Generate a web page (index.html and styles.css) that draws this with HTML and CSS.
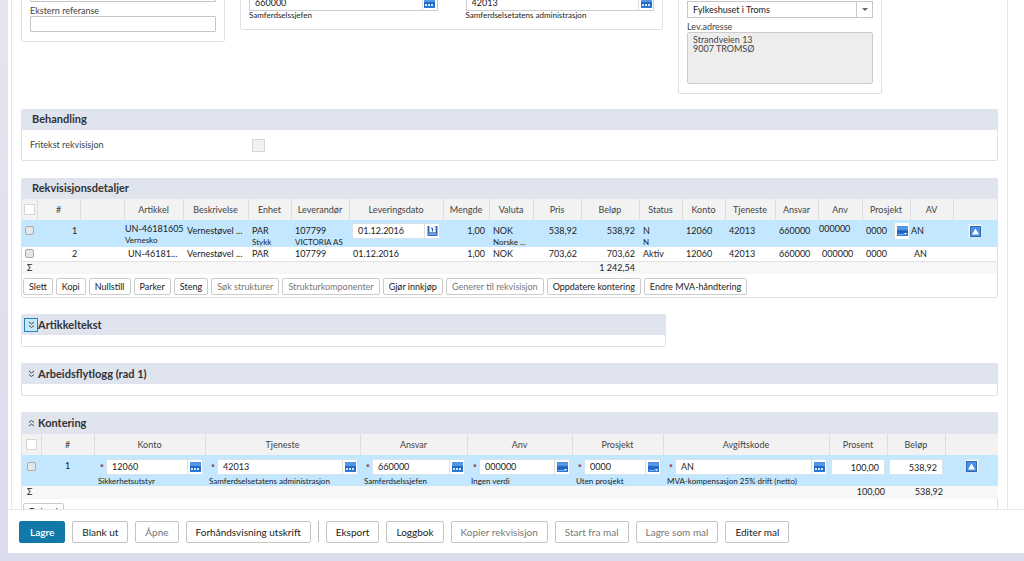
FILE: index.html
```html
<!DOCTYPE html>
<html lang="no">
<head>
<meta charset="utf-8">
<title>Rekvisisjon</title>
<meta name="viewport" content="width=device-width, initial-scale=1">
<link rel="stylesheet" href="styles.css">
</head>
<body>
<svg class="defs" aria-hidden="true">
  <linearGradient id="blue" x1="0" y1="0" x2="0" y2="1">
    <stop offset="0" stop-color="#4b8fe0"/><stop offset="0.3" stop-color="#5a9fea"/><stop offset="0.5" stop-color="#1c62c2"/><stop offset="1" stop-color="#2f7bd6"/>
  </linearGradient>
  <symbol id="dots" viewBox="0 0 11 10"><rect width="11" height="10" fill="url(#blue)"/><path d="M1 6h2v2H1zM4 6h2v2H4zM7 6h2v2H7z" fill="#d6eaff"/></symbol>
  <symbol id="list" viewBox="0 0 11 10"><rect width="11" height="10" fill="url(#blue)"/><path d="M1 8.500h6" stroke="#7db4f0" fill="none"/><path d="M7 7h3L8.500 9z" fill="#fff"/></symbol>
  <symbol id="up" viewBox="0 0 11 11"><rect x=".5" y=".5" width="10" height="10" fill="#4a90e2" stroke="#2c68b4"/><path d="M5.500 2.500L9 8.500H2z" fill="#fff"/></symbol>
  <symbol id="calendar" viewBox="0 0 11 11"><path d="M0 0h11v11H0z" fill="#2f62ae"/><path d="M2 0h7v7H2z" fill="#e9f1fc"/><path d="M1 8h9v2H1z" fill="#78a9e8"/><path d="M4 2.500h1.500V6" stroke="#21457e" fill="none"/></symbol>
  <symbol id="down2" viewBox="0 0 7 8"><path d="M1 1l2.500 2L6 1M1 4.500l2.500 2L6 4.500" fill="none" stroke="#444"/></symbol>
  <symbol id="up2" viewBox="0 0 7 8"><path d="M1 3.500l2.500-2L6 3.500M1 7l2.500-2L6 7" fill="none" stroke="#444"/></symbol>
</svg>
<div class="shell">
<main class="workspace">
<div class="page">
  <div class="head-grid">
    <section class="box box-ref">
      <input class="field" aria-label="Referanse">
      <label for="ext">Ekstern referanse</label>
      <input class="field" id="ext">
    </section>
    <section class="box box-org">
      <div>
        <div class="lookup"><input value="660000" aria-label="Ansvar"><button aria-label="Velg ansvar"><svg><use href="#dots"/></svg></button></div>
        <div class="sub">Samferdselssjefen</div>
      </div>
      <div>
        <div class="lookup"><input value="42013" aria-label="Tjeneste"><button aria-label="Velg tjeneste"><svg><use href="#dots"/></svg></button></div>
        <div class="sub">Samferdselsetatens administrasjon</div>
      </div>
    </section>
    <section class="box box-addr">
      <div class="select"><select aria-label="Leveringssted"><option>Fylkeshuset i Troms</option></select></div>
      <label for="addr">Lev.adresse</label>
      <textarea id="addr" readonly>Strandveien 13
9007 TROMSØ</textarea>
    </section>
  </div>

  <section class="card">
    <h2>Behandling</h2>
    <div class="free"><label for="fri">Fritekst rekvisisjon</label><input type="checkbox" class="check check-off" id="fri" disabled></div>
  </section>

  <section class="card">
    <h2>Rekvisisjonsdetaljer</h2>
    <table class="grid details">
      <colgroup><col class="w15"><col class="w43"><col class="w44"><col class="w59"><col class="w65"><col class="w43"><col class="w58"><col class="w94"><col class="w46"><col class="w44"><col class="w48"><col class="w58"><col class="w43"><col class="w43"><col class="w50"><col class="w43"><col class="w44"><col class="w48"><col class="w43"><col class="w44"></colgroup>
      <thead><tr><th><input type="checkbox" class="check check-all" aria-label="Velg alle"></th><th>#</th><th></th><th>Artikkel</th><th>Beskrivelse</th><th>Enhet</th><th>Leverandør</th><th>Leveringsdato</th><th>Mengde</th><th>Valuta</th><th>Pris</th><th>Beløp</th><th>Status</th><th>Konto</th><th>Tjeneste</th><th>Ansvar</th><th>Anv</th><th>Prosjekt</th><th>AV</th><th></th></tr></thead>
      <tbody>
      <tr class="active">
        <td><input type="checkbox" class="check check-row" aria-label="Velg rad 1"></td><td class="nr">1</td><td></td>
        <td class="edit art">UN-46181605<div class="sub">Vernesko</div></td><td>Vernestøvel ...</td><td>PAR<div class="sub">Stykk</div></td><td>107799<div class="sub">VICTORIA AS</div></td>
        <td class="edit"><div class="lookup"><input value="01.12.2016" aria-label="Leveringsdato"><button aria-label="Kalender"><svg><use href="#calendar"/></svg></button></div></td>
        <td class="num">1,00</td><td>NOK<div class="sub">Norske ...</div></td><td class="num">538,92</td><td class="num">538,92</td><td>N<div class="sub">N</div></td><td>12060</td><td>42013</td><td>660000</td><td class="edit tight">000000</td>
        <td class="edit"><div class="lookup ghost"><input value="0000" aria-label="Prosjekt"><button aria-label="Velg prosjekt"><svg><use href="#list"/></svg></button></div></td>
        <td class="tight">AN</td><td class="act"><button class="mini" aria-label="Skjul rad"><svg><use href="#up"/></svg></button></td>
      </tr>
      <tr class="plain">
        <td><input type="checkbox" class="check check-row" aria-label="Velg rad 2"></td><td class="nr">2</td><td></td><td class="wide">UN-46181...</td><td>Vernestøvel ...</td><td>PAR</td><td>107799</td><td>01.12.2016</td><td class="num">1,00</td><td>NOK</td><td class="num">703,62</td><td class="num">703,62</td><td>Aktiv</td><td>12060</td><td>42013</td><td>660000</td><td>000000</td><td>0000</td><td>AN</td><td></td>
      </tr>
      </tbody>
      <tfoot><tr><td class="sigma">Σ</td><td colspan="10"></td><td class="num">1 242,54</td><td colspan="8"></td></tr></tfoot>
    </table>
    <div class="tools">
      <button>Slett</button><button>Kopi</button><button>Nullstill</button><button>Parker</button><button>Steng</button><button disabled>Søk strukturer</button><button disabled>Strukturkomponenter</button><button>Gjør innkjøp</button><button disabled>Generer til rekvisisjon</button><button>Oppdatere kontering</button><button>Endre MVA-håndtering</button>
    </div>
  </section>

  <section class="card card-part">
    <h2 class="fold"><button class="focus" aria-label="Vis artikkeltekst"><svg><use href="#down2"/></svg></button>Artikkeltekst</h2>
    <div class="closed"></div>
  </section>

  <section class="card">
    <h2 class="fold"><button aria-label="Vis arbeidsflytlogg"><svg><use href="#down2"/></svg></button>Arbeidsflytlogg (rad 1)</h2>
    <div class="closed"></div>
  </section>

  <section class="card">
    <h2 class="fold fold-open"><button aria-label="Skjul kontering"><svg><use href="#up2"/></svg></button>Kontering</h2>
    <table class="grid posting">
      <colgroup><col class="w19"><col class="w53"><col class="w111"><col class="w155"><col class="w107"><col class="w105"><col class="w91"><col class="w166"><col class="w58"><col class="w58"><col class="w53"></colgroup>
      <thead><tr><th><input type="checkbox" class="check check-all" aria-label="Velg alle"></th><th>#</th><th>Konto</th><th>Tjeneste</th><th>Ansvar</th><th>Anv</th><th>Prosjekt</th><th>Avgiftskode</th><th>Prosent</th><th>Beløp</th><th></th></tr></thead>
      <tbody><tr class="active">
        <td><input type="checkbox" class="check check-row" aria-label="Velg rad 1"></td><td class="nr">1</td>
        <td><div class="req"><i>*</i><div class="lookup"><input value="12060" aria-label="Konto"><button aria-label="Velg konto"><svg><use href="#dots"/></svg></button></div></div><div class="sub">Sikkerhetsutstyr</div></td>
        <td><div class="req"><i>*</i><div class="lookup"><input value="42013" aria-label="Tjeneste"><button aria-label="Velg tjeneste"><svg><use href="#dots"/></svg></button></div></div><div class="sub">Samferdselsetatens administrasjon</div></td>
        <td><div class="req"><i>*</i><div class="lookup"><input value="660000" aria-label="Ansvar"><button aria-label="Velg ansvar"><svg><use href="#dots"/></svg></button></div></div><div class="sub">Samferdselssjefen</div></td>
        <td><div class="req"><i>*</i><div class="lookup"><input value="000000" aria-label="Anv"><button aria-label="Velg anv"><svg><use href="#list"/></svg></button></div></div><div class="sub">Ingen verdi</div></td>
        <td><div class="req"><i>*</i><div class="lookup"><input value="0000" aria-label="Prosjekt"><button aria-label="Velg prosjekt"><svg><use href="#list"/></svg></button></div></div><div class="sub">Uten prosjekt</div></td>
        <td><div class="req"><i>*</i><div class="lookup"><input value="AN" aria-label="Avgiftskode"><button aria-label="Velg avgiftskode"><svg><use href="#dots"/></svg></button></div></div><div class="sub">MVA-kompensasjon 25% drift (netto)</div></td>
        <td><input class="field right" value="100,00" aria-label="Prosent"></td>
        <td><input class="field right" value="538,92" aria-label="Beløp"></td>
        <td class="act"><button class="mini" aria-label="Skjul rad"><svg><use href="#up"/></svg></button></td>
      </tr></tbody>
      <tfoot><tr><td class="sigma">Σ</td><td colspan="7"></td><td class="num">100,00</td><td class="num">538,92</td><td></td></tr></tfoot>
    </table>
    <div class="tools"><button>Del rad</button></div>
  </section>
</div>
</main>
<footer class="actions">
  <button class="primary">Lagre</button><button>Blank ut</button><button disabled>Åpne</button><button>Forhåndsvisning utskrift</button><span class="divider"></span><button>Eksport</button><button>Loggbok</button><button disabled>Kopier rekvisisjon</button><button disabled>Start fra mal</button><button disabled>Lagre som mal</button><button>Editer mal</button>
</footer>
</div>
</body>
</html>
```
FILE: styles.css
```css
* { box-sizing: border-box; }
body { margin: 0; background: linear-gradient(#e3e5f0, #dadcec); color: #222; font: 9px/12px Lato, "Open Sans", sans-serif; }
button, input, select, textarea { font: inherit; color: inherit; margin: 0; }
.defs { position: absolute; width: 0; height: 0; }
.shell { display: flex; flex-direction: column; height: 100vh; padding: 0 0 8px 8px; }
.workspace { flex: 1; min-height: 0; overflow: hidden; background: #fff; }
.page { margin: 0 16px 0 3px; padding: 0 9px; border: solid #e4e5ec; border-width: 0 1px; }

.head-grid { display: grid; grid-template-columns: 204fr 423fr 204fr 101fr; gap: 15px; align-items: start; height: 124px; margin-top: -15px; }
.box { border: 1px solid #e0e1e6; border-radius: 2px; padding: 0 8px 9px; color: #444; }
.box label { display: block; line-height: 11px; }
.field { display: block; width: 100%; height: 16px; border: 1px solid #c6c6c6; border-radius: 1px; background: #fff; padding: 0 5px; line-height: 14px; }
.right { text-align: right; }
.box-ref label { margin-top: 3px; }
.box-org { display: grid; grid-template-columns: 1fr 1fr; gap: 28px; padding-top: 9px; }
.box-addr { padding-top: 15px; }
.select { position: relative; margin-bottom: 3px; color: #222; }
.select select { appearance: none; display: block; width: 100%; height: 17px; border: 1px solid #c6c6c6; background: #fff; padding: 0 5px; }
.select::before { content: ""; position: absolute; right: 16px; top: 1px; bottom: 1px; border-left: 1px solid #ccc; }
.select::after { content: ""; position: absolute; right: 5px; top: 7px; border: 3px solid transparent; border-top-color: #666; }
textarea { display: block; width: 100%; height: 52px; resize: none; border: 1px solid #ccc; border-radius: 2px; background: #ededed; padding: 2px 5px; line-height: 9px; }

.lookup { display: flex; flex: 1; min-width: 0; height: 16px; border: 1px solid #ccc; background: #fff; color: #222; }
.lookup input { flex: 1; width: 0; min-width: 0; border: 0; padding: 0 5px; background: none; line-height: 14px; }
.lookup button { display: grid; place-items: center; width: 15px; padding: 0; border: 0; border-left: 1px solid #ddd; background: #fff; }
.lookup svg { width: 11px; height: 10px; }
.sub { font-size: 8px; line-height: 9px; color: #222; white-space: nowrap; }

.card { border: 1px solid #e0e1e6; border-radius: 2px; margin-bottom: 16px; }
.card-part { width: 66%; }
h2 { margin: -1px -1px 0; height: 21px; padding-left: 11px; background: #dfe4ef; border-radius: 2px 2px 0 0; color: #333; font-size: 11px; line-height: 20px; }
.fold { display: flex; align-items: center; padding-left: 3px; }
.fold-open { height: 22px; }
.fold button { display: grid; place-items: center; width: 14px; height: 14px; padding: 0; border: 1px solid transparent; background: none; }
.fold .focus { background: #c5e8fb; border-color: #2a83b8; }
.fold svg { width: 7px; height: 8px; }
.closed { height: 11px; }
.free { display: grid; grid-template-columns: 222px 1fr; align-items: center; height: 30px; margin-bottom: 17px; padding-left: 8px; color: #444; }
.card:has(.free) .free { margin-bottom: 0; }
.card:has(.free) { margin-bottom: 17px; }
.check { appearance: none; display: block; margin: 0 auto; width: 11px; height: 11px; border: 1px solid #d6d6d6; background: #fff; }
.check-off { width: 13px; height: 13px; margin: 0; background: #f1f1f1; }
.check-row { width: 9px; height: 9px; border-color: #aaa; border-radius: 2px; background: #e6e6e6; }

.grid { width: 100%; table-layout: fixed; border-collapse: collapse; }
th { height: 21px; padding: 0; background: #f2f2f2; border-left: 1px solid #ddd; color: #444; font-weight: 400; white-space: nowrap; }
th:first-child { border-left: 0; }
td { padding: 0 4px; vertical-align: top; white-space: nowrap; }
td:first-child { padding: 0; }
.w15 { width: 15px; } .w19 { width: 19px; } .w43 { width: 43px; } .w44 { width: 44px; } .w46 { width: 46px; }
.w48 { width: 48px; } .w50 { width: 50px; } .w53 { width: 53px; } .w58 { width: 58px; } .w59 { width: 59px; }
.w65 { width: 65px; } .w91 { width: 91px; } .w94 { width: 94px; } .w105 { width: 105px; } .w107 { width: 107px; }
.w111 { width: 111px; } .w155 { width: 155px; } .w166 { width: 166px; }
.active { height: 27px; background: #c2e7fe; }
.active .lookup, .active .field { border-color: #d6e3ea; }
.num { text-align: right; }
td.nr { text-align: center; padding-left: 32px; padding-right: 0; }
.details .active td { padding-top: 5px; }
.details .active td.edit { padding-top: 3px; }
.details .active td.art { padding-left: 1px; }
.details .active td.act { padding: 4px 0 0; }
.details .active .lookup { margin: 0 -1px; }
.details .active td.tight { padding-left: 1px; }
.details .active .ghost { margin: 0 -3px; border: 0; background: none; }
.ghost input { padding: 0 3px; }
.details .sub { line-height: 10px; }
.plain { height: 14px; }
.plain td { padding-top: 1px; }
.plain .check, .details .active .check { margin-top: 1px; }
tfoot tr { height: 13px; background: #f7f7f7; }
.details tfoot { border-top: 1px solid #e2e2e2; }
td.sigma { padding-left: 5px; }
.mini { display: grid; place-items: center; width: 14px; height: 14px; margin: 0 auto; padding: 0; border: 1px solid #dde6ec; background: #fff; }
.mini svg { width: 11px; height: 11px; }
.posting .active { height: 30px; }
.posting .active td { padding-top: 4px; }
.posting .active td.nr { padding: 5px 0 0; }
.posting .active .check { margin-top: 3px; }
.posting td:nth-child(n+9) { padding-left: 2px; padding-right: 2px; }
.posting td:nth-child(n+3):nth-child(-n+8) { padding-left: 4px; padding-right: 2px; }
.req { display: flex; }
.req i { width: 8px; text-align: center; color: #8c0f26; font-style: normal; font-weight: 700; line-height: 18px; }
.posting tfoot td.num { padding-right: 4px; }

.tools { display: flex; gap: 3px; padding: 4px 1px 2px; }
.tools button { height: 17px; padding: 0 5px; border: 1px solid #ccc; border-radius: 2px; background: #fff; line-height: 14px; white-space: nowrap; }
button:disabled { color: #777; }

.actions { display: flex; align-items: center; gap: 7px; height: 44px; padding: 0 11px; background: #fff; border-top: 1px solid #e6e6ea; }
.actions button { height: 22px; padding: 0 9px; border: 1px solid #c4c4c4; border-radius: 2px; background: #fff; font-size: 10px; white-space: nowrap; }
.actions .primary { padding: 0 10px; background: #1278a8; border-color: #1278a8; color: #fff; font-weight: 600; }
.divider { height: 21px; border-left: 1px solid #bbb; }
```
